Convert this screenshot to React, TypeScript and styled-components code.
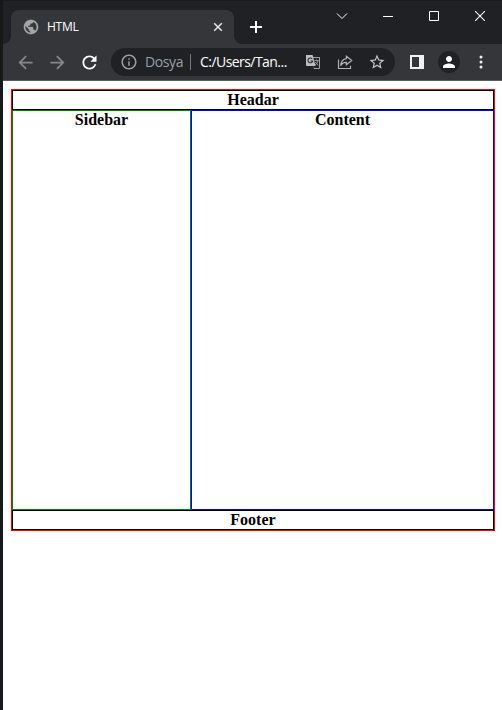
import React from 'react';
import styled, { createGlobalStyle } from 'styled-components';

const GlobalStyle = createGlobalStyle`
  html, body { margin: 0; padding: 0; background: #fff; overflow: hidden; }
  * { box-sizing: border-box; }
  svg { display: block; flex: none; }
`;

const Desktop = styled.div`
  width: 502px;
  height: 710px;
  padding-left: 3px;
  overflow: hidden;
  background: #17181a;
`;

const BrowserWindow = styled.div`
  width: 499px;
  height: 710px;
  display: flex;
  flex-direction: column;
  overflow: hidden;
  background: #fff;
`;

const TitleBar = styled.div`
  flex: none;
  height: 44px;
  display: flex;
  padding: 9px 0 0 8px;
  background: #202124;
  border-top: 1px solid #191b1b;
`;

const Tab = styled.div`
  position: relative;
  flex: none;
  width: 223px;
  height: 34px;
  display: flex;
  align-items: center;
  padding: 0 9px 0 11px;
  background: #35363a;
  border-radius: 8px 8px 0 0;
  color: #fff;
  &::before, &::after {
    content: '';
    position: absolute;
    bottom: 0;
    width: 8px;
    height: 8px;
  }
  &::before {
    left: -8px;
    background: radial-gradient(circle at 0 0, transparent 7.5px, #35363a 8.2px);
  }
  &::after {
    right: -8px;
    background: radial-gradient(circle at 100% 0, transparent 7.5px, #35363a 8.2px);
  }
`;

const TabTitle = styled.span`
  flex: 1;
  margin-left: 7px;
  font: 12px/16px 'Open Sans', sans-serif;
  letter-spacing: -0.25px;
`;

const NewTab = styled.div`
  flex: none;
  width: 28px;
  height: 34px;
  margin-left: 8px;
  display: grid;
  place-items: center;
`;

const WindowControls = styled.div`
  display: flex;
  flex: none;
  height: 32px;
  margin: -9px 0 0 49px;
`;

const WindowButton = styled.div`
  flex: none;
  width: 46px;
  height: 30px;
  display: grid;
  place-items: center;
`;

const Toolbar = styled.div`
  flex: none;
  height: 37px;
  display: flex;
  align-items: center;
  padding-left: 6px;
  background: #35363a;
  border-bottom: 1px solid #5c5b60;
`;

const ToolButton = styled.div`
  flex: none;
  width: 32px;
  height: 32px;
  display: grid;
  place-items: center;
`;

const AddressBar = styled.div`
  flex: none;
  width: 284px;
  height: 28px;
  margin-left: 6px;
  display: flex;
  align-items: center;
  padding-left: 9px;
  border-radius: 14px;
  background: #202124;
`;

const AddressText = styled.span<{ $muted?: boolean }>`
  flex: none;
  width: ${p => (p.$muted ? '45px' : '96px')};
  margin-left: ${p => (p.$muted ? '7px' : '9px')};
  font: 14px/20px 'Open Sans', sans-serif;
  letter-spacing: ${p => (p.$muted ? '-0.4px' : '-0.55px')};
  white-space: nowrap;
  color: ${p => (p.$muted ? '#9aa0a6' : '#fff')};
`;

const AddressDivider = styled.span`
  width: 1px;
  height: 16px;
  background: #75787c;
`;

const AddressActions = styled.div`
  display: flex;
  align-items: center;
  gap: 15px;
  margin-left: 9px;
`;

const PanelButton = styled(ToolButton)`
  margin-left: 6px;
`;

const Avatar = styled.div`
  flex: none;
  width: 22px;
  height: 22px;
  margin: 0 5px;
  display: grid;
  place-items: center;
  border-radius: 50%;
  background: #202124;
`;

const Viewport = styled.main`
  flex: 1;
  padding: 8px 7px 0 8px;
  background: #fff;
  color: #000;
  font: bold 16px/18px 'Liberation Serif', 'Times New Roman', serif;
  text-align: center;
`;

const PageFrame = styled.div`
  border: 1px solid #f00;
`;

const Band = styled.div`
  height: 20px;
  border: 1px solid #000;
`;

const Columns = styled.div`
  display: flex;
  height: 400px;
`;

const Column = styled.section<{ $color: string; $width: string }>`
  width: ${p => p.$width};
  border: 1px solid ${p => p.$color};
`;

const Icon = ({ d, size = 18, color = '#fff' }: { d: string; size?: number; color?: string }) => (
  <svg width={size} height={size} viewBox="0 0 24 24" fill={color}><path d={d} /></svg>
);

const PATHS = {
  globe: 'M12 2C6.48 2 2 6.48 2 12s4.48 10 10 10 10-4.48 10-10S17.52 2 12 2zm-1 17.93c-3.95-.49-7-3.85-7-7.93 0-.62.08-1.21.21-1.79L9 15v1c0 1.1.9 2 2 2v1.93zm6.9-2.54c-.26-.81-1-1.39-1.9-1.39h-1v-3c0-.55-.45-1-1-1H8v-2h2c.55 0 1-.45 1-1V7h2c1.1 0 2-.9 2-2v-.41c2.93 1.19 5 4.06 5 7.41 0 2.08-.8 3.97-2.1 5.39z',
  back: 'M20 11H7.83l5.59-5.59L12 4l-8 8 8 8 1.41-1.41L7.83 13H20v-2z',
  forward: 'M12 4l-1.41 1.41L16.17 11H4v2h12.17l-5.58 5.59L12 20l8-8z',
  reload: 'M17.65 6.35C16.2 4.9 14.21 4 12 4c-4.42 0-7.99 3.58-7.99 8s3.57 8 7.99 8c3.73 0 6.84-2.55 7.73-6h-2.08c-.82 2.33-3.04 4-5.65 4-3.31 0-6-2.69-6-6s2.69-6 6-6c1.66 0 3.14.69 4.22 1.78L13 11h7V4l-2.35 2.35z',
  info: 'M11 7h2v2h-2zm0 4h2v6h-2zm1-9C6.48 2 2 6.48 2 12s4.48 10 10 10 10-4.48 10-10S17.52 2 12 2zm0 18c-4.41 0-8-3.59-8-8s3.59-8 8-8 8 3.59 8 8-3.59 8-8 8z',
  star: 'M22 9.24l-7.19-.62L12 2 9.19 8.63 2 9.24l5.46 4.73L5.82 21 12 17.27 18.18 21l-1.63-7.03L22 9.24zM12 15.4l-3.76 2.27 1-4.28-3.32-2.88 4.38-.38L12 6.1l1.71 4.04 4.38.38-3.32 2.88 1 4.28L12 15.4z',
  person: 'M12 12c2.21 0 4-1.79 4-4s-1.79-4-4-4-4 1.79-4 4 1.79 4 4 4zm0 2c-2.67 0-8 1.34-8 4v2h16v-2c0-2.66-5.33-4-8-4z',
};

const Globe = () => (
  <svg width="18" height="18" viewBox="-.6 -.6 25.2 25.2" fill="#a2a6ab" stroke="#a2a6ab" strokeWidth=".4">
    <path d={PATHS.globe} />
  </svg>
);

const Translate = () => (
  <svg width="16" height="16" viewBox="0 0 16 16">
    <path d="M7 3.5h7.5v11H8.2" fill="none" stroke="#a4a5a7" />
    <path d="M1 1h6.6l3 11H2a1 1 0 0 1-1-1z" fill="#bdbebf" />
    <path d="M7.2 4.8A2.4 2.4 0 1 0 7.7 7H5.5M8.2 12v2.5l2-2.5" fill="none" stroke="#303134" strokeWidth="1.1" />
    <path d="M9.5 6.5h4M11.5 5.5v1M13 6.7c-.4 2-1.5 3.3-3 4.4M10.2 8l3 3.4" fill="none" stroke="#a4a5a7" strokeWidth=".9" />
  </svg>
);

const Share = () => (
  <svg width="17" height="17" viewBox="0 0 17 17" fill="none" stroke="#b2b3b5" strokeWidth="1.15">
    <path d="M2.5 5.5v9h12v-2.8M10.4 2.2l5.4 4.3-5.4 4.3V8.4C7.3 8.3 5.8 9.4 4.6 11.8 5 7.6 6.9 5 10.4 4.6z" />
  </svg>
);

export default function App() {
  return (
    <>
      <GlobalStyle />
      <Desktop>
        <BrowserWindow>
          <TitleBar>
            <Tab>
              <Globe />
              <TabTitle>HTML</TabTitle>
              <svg width="14" height="14" viewBox="0 0 14 14"><path d="M3.2 3.2l7.6 7.6m0-7.6l-7.6 7.6" stroke="#e6e6e7" strokeWidth="1.5" /></svg>
            </Tab>
            <NewTab>
              <svg width="12" height="12" viewBox="0 0 12 12"><path d="M6 0v12M0 6h12" stroke="#fff" strokeWidth="2" /></svg>
            </NewTab>
            <WindowControls>
              <WindowButton><svg width="12" height="12" viewBox="0 0 12 12"><path d="M1 3.5l5 5 5-5" fill="none" stroke="#fff" /></svg></WindowButton>
              <WindowButton><svg width="10" height="10" viewBox="0 0 10 10"><path d="M0 5.5h10" stroke="#fff" /></svg></WindowButton>
              <WindowButton><svg width="10" height="10" viewBox="0 0 10 10"><path d="M.5.5h9v9h-9z" fill="none" stroke="#fff" /></svg></WindowButton>
              <WindowButton><svg width="10" height="10" viewBox="0 0 10 10"><path d="M0 0l10 10m0-10L0 10" stroke="#fff" strokeWidth="1.1" /></svg></WindowButton>
            </WindowControls>
          </TitleBar>
          <Toolbar>
            <ToolButton><Icon d={PATHS.back} size={21} color="#87888b" /></ToolButton>
            <ToolButton><Icon d={PATHS.forward} size={21} color="#87888b" /></ToolButton>
            <ToolButton><Icon d={PATHS.reload} size={21} /></ToolButton>
            <AddressBar>
              <Icon d={PATHS.info} size={18} color="#9aa0a6" />
              <AddressText $muted>Dosya</AddressText>
              <AddressDivider />
              <AddressText>C:/Users/Tan...</AddressText>
              <AddressActions>
                <Translate />
                <Share />
                <Icon d={PATHS.star} size={18} color="#c4c5c6" />
              </AddressActions>
            </AddressBar>
            <PanelButton>
              <svg width="14" height="14" viewBox="0 0 14 14"><path d="M0 0h14v14H0zM2 2v10h7V2z" fill="#f1f1f2" fillRule="evenodd" /></svg>
            </PanelButton>
            <Avatar><Icon d={PATHS.person} /></Avatar>
            <ToolButton>
              <svg width="4" height="14" viewBox="0 0 4 14" fill="#f1f1f2"><circle cx="2" cy="2" r="1.5" /><circle cx="2" cy="7" r="1.5" /><circle cx="2" cy="12" r="1.5" /></svg>
            </ToolButton>
          </Toolbar>
          <Viewport>
            <PageFrame>
              <Band>Headar</Band>
              <Columns>
                <Column $color="#008000" $width="179px">Sidebar</Column>
                <Column $color="#0000ff" $width="303px">Content</Column>
              </Columns>
              <Band>Footer</Band>
            </PageFrame>
          </Viewport>
        </BrowserWindow>
      </Desktop>
    </>
  );
}
